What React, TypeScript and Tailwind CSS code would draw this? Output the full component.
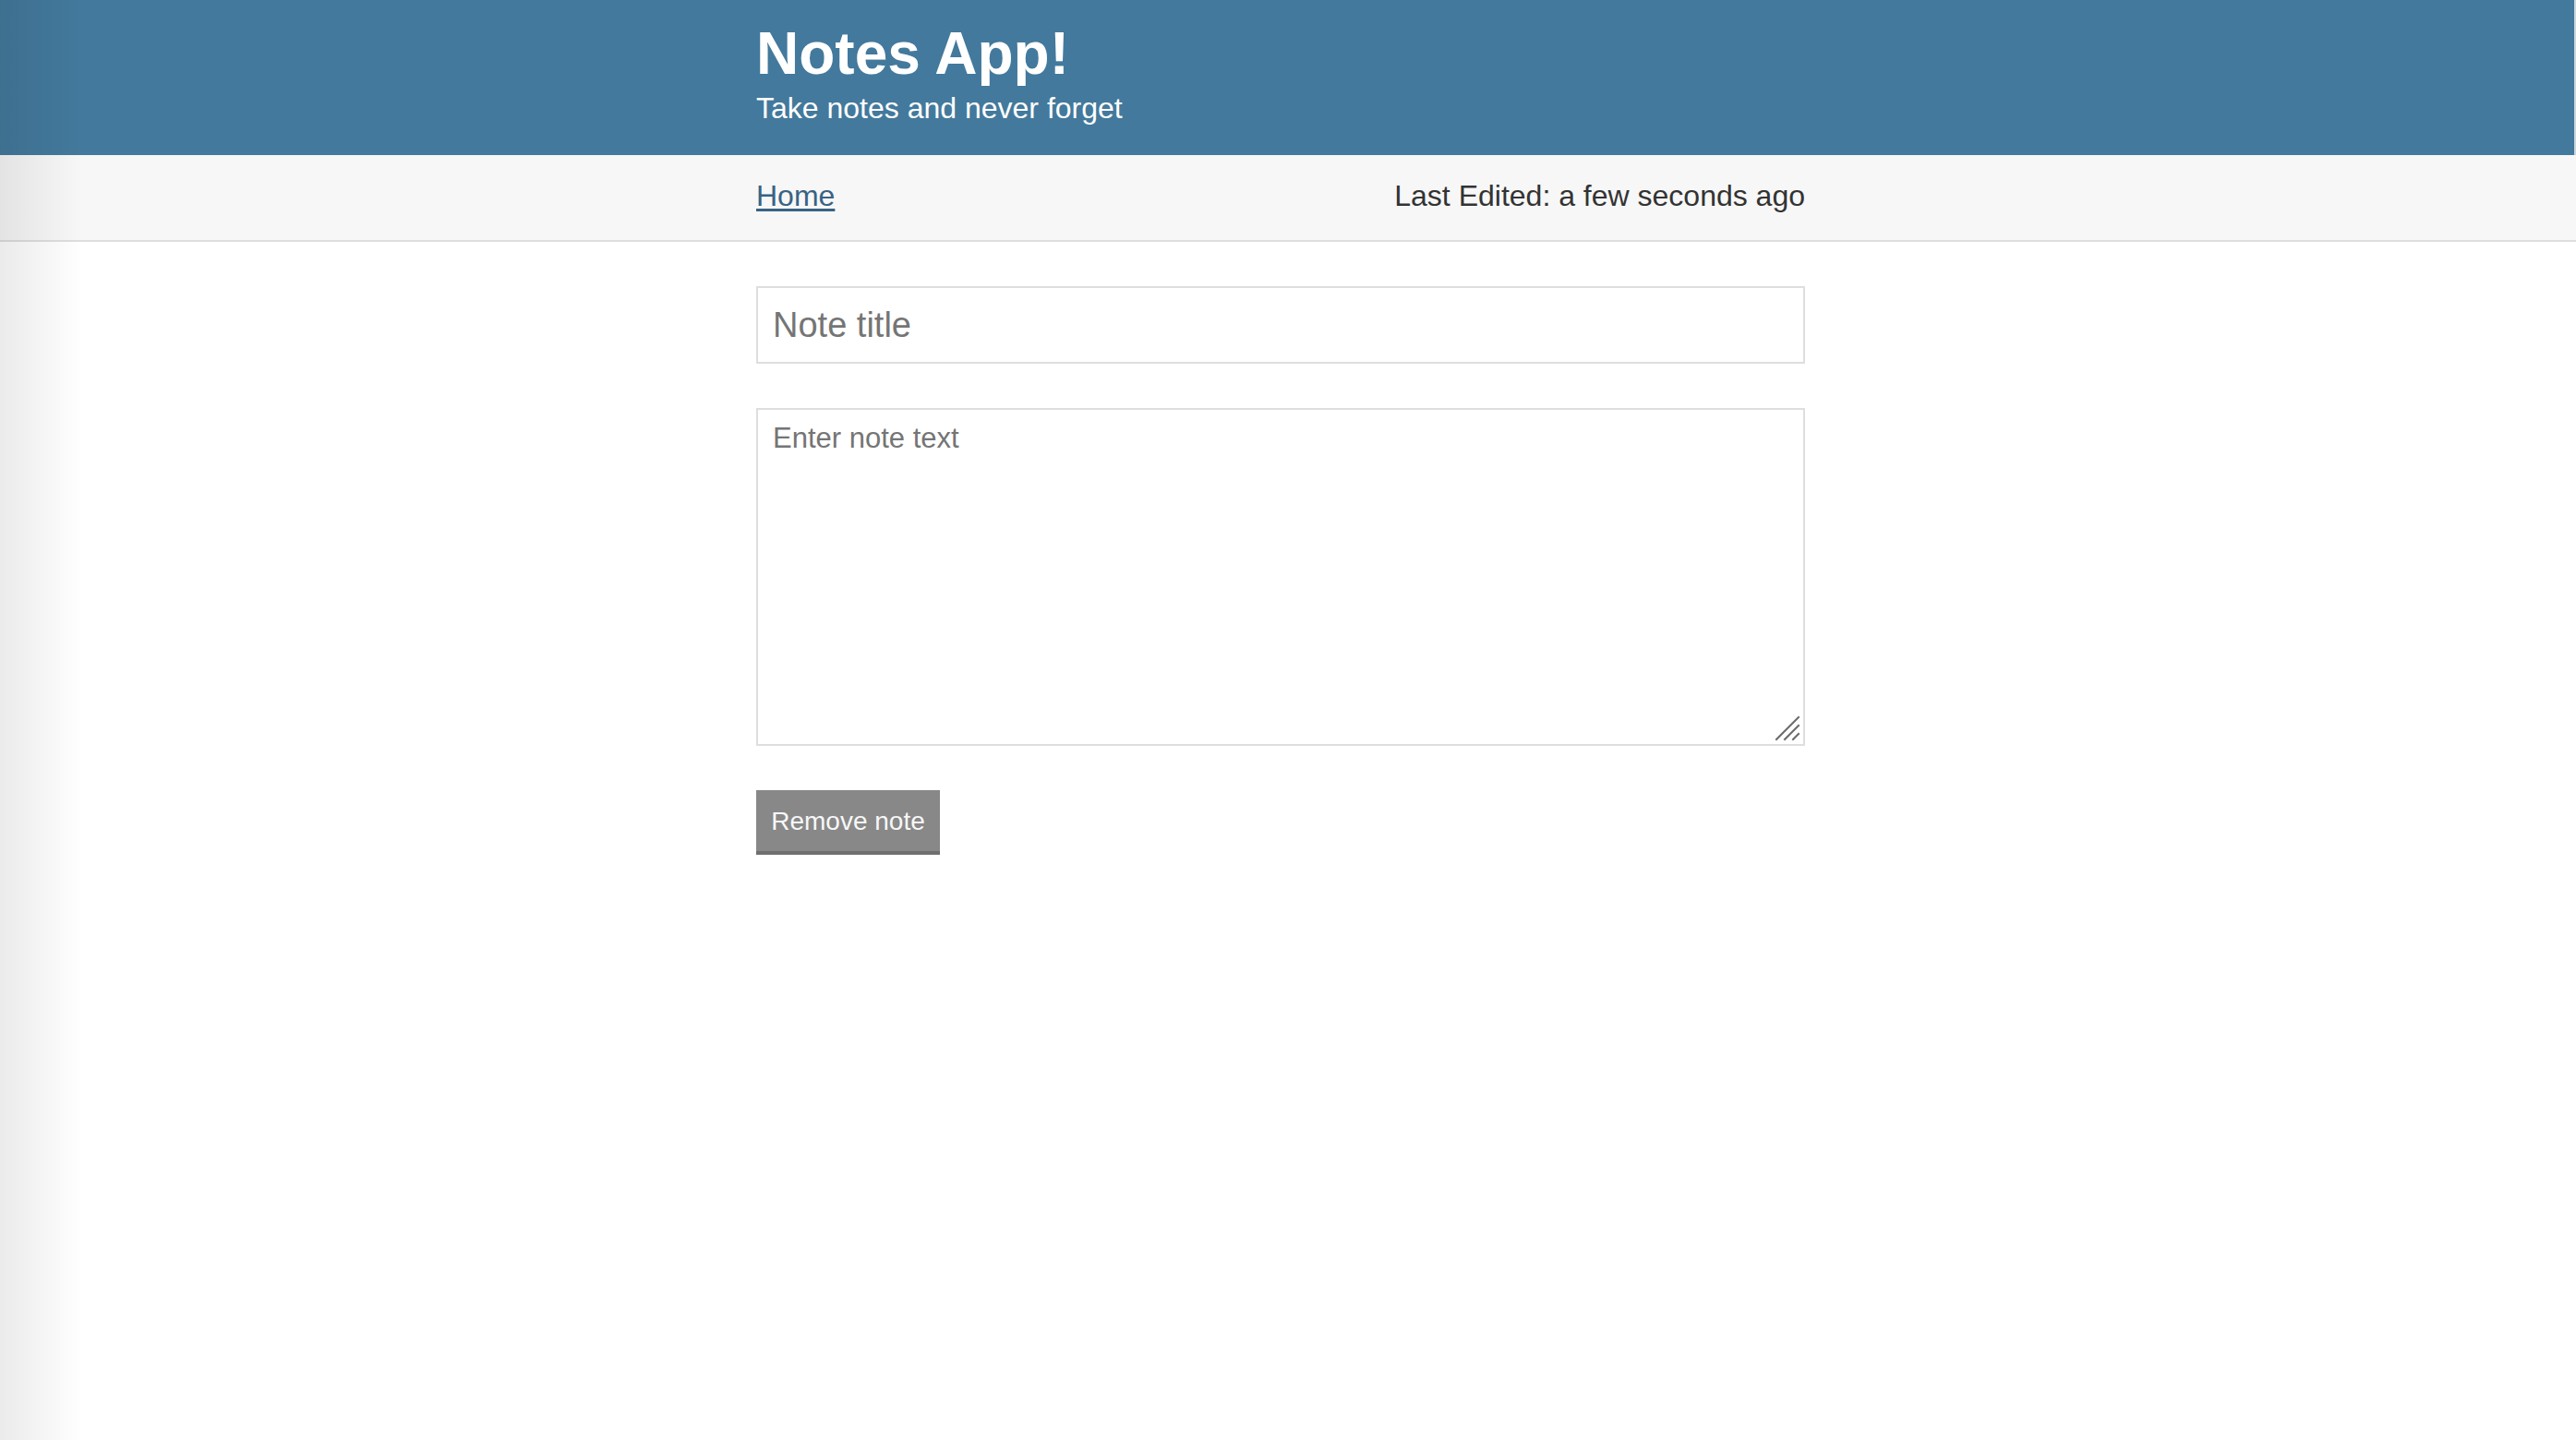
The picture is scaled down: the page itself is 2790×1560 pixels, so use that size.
import React, { useState } from 'react';

const Container: React.FC<{ children: React.ReactNode; className?: string }> = ({ children, className = '' }) => (
  <div className={`mx-auto w-[1152px] pr-[16px] ${className}`}>{children}</div>
);

// mac-style resize grip, drawn over the textarea corner
const ResizeGrip = () => (
  <svg className="pointer-events-none absolute bottom-[5px] right-[5px]" width="28" height="28" viewBox="0 0 28 28">
    <g stroke="#6b6b6b" strokeWidth="2" strokeLinecap="square">
      <line x1="2" y1="26" x2="26" y2="2" />
      <line x1="11" y1="26" x2="26" y2="11" />
      <line x1="20" y1="26" x2="26" y2="20" />
    </g>
  </svg>
);

export default function App() {
  const [title, setTitle] = useState('');
  const [body, setBody] = useState('');

  return (
    <div className="relative min-h-screen bg-white font-['Liberation_Sans',Arial,sans-serif] text-[#333333]">
      <header className="h-[168px] bg-[#43799c] pt-[26px] text-white">
        <Container>
          <h1 className="text-[64px] font-bold leading-none">Notes App!</h1>
          <p className="mt-[8px] text-[32px] leading-[38px]">Take notes and never forget</p>
        </Container>
      </header>

      <nav className="h-[94px] border-b-2 border-[#dedede] bg-[#f7f7f7]">
        <Container className="flex h-[92px] items-center justify-between pb-[4px]">
          <a href="#" className="text-[32px] leading-[38px] text-[#386384] underline underline-offset-[3px]">
            Home
          </a>
          <span className="text-[32px] leading-[38px] text-[#333333]">Last Edited: a few seconds ago</span>
        </Container>
      </nav>

      <Container className="pt-[48px]">
        <input
          value={title}
          onChange={e => setTitle(e.target.value)}
          placeholder="Note title"
          className="block h-[84px] w-full border-2 border-[#dedede] bg-white px-[16px] text-[38px] text-[#333333] outline-none placeholder:text-[#757575]"
        />
        <div className="relative mt-[48px]">
          <textarea
            value={body}
            onChange={e => setBody(e.target.value)}
            placeholder="Enter note text"
            className="block h-[366px] w-full resize-none border-2 border-[#dedede] bg-white px-[16px] pt-[12px] text-[31px] leading-[38px] text-[#333333] outline-none placeholder:text-[#757575]"
          />
          <ResizeGrip />
        </div>
        <button className="mt-[48px] h-[70px] w-[199px] border-b-4 border-[#6f6f6f] bg-[#888888] pt-[2px] text-[28px] text-[#f7f7f7]">
          Remove note
        </button>
      </Container>

      {/* window edge shading */}
      <div className="pointer-events-none absolute left-0 top-0 h-full w-[90px] bg-gradient-to-r from-black/[0.08] to-transparent" />
      <div className="pointer-events-none absolute right-0 top-0 h-[168px] w-[2px] bg-[#cbd6dd]" />
    </div>
  );
}
